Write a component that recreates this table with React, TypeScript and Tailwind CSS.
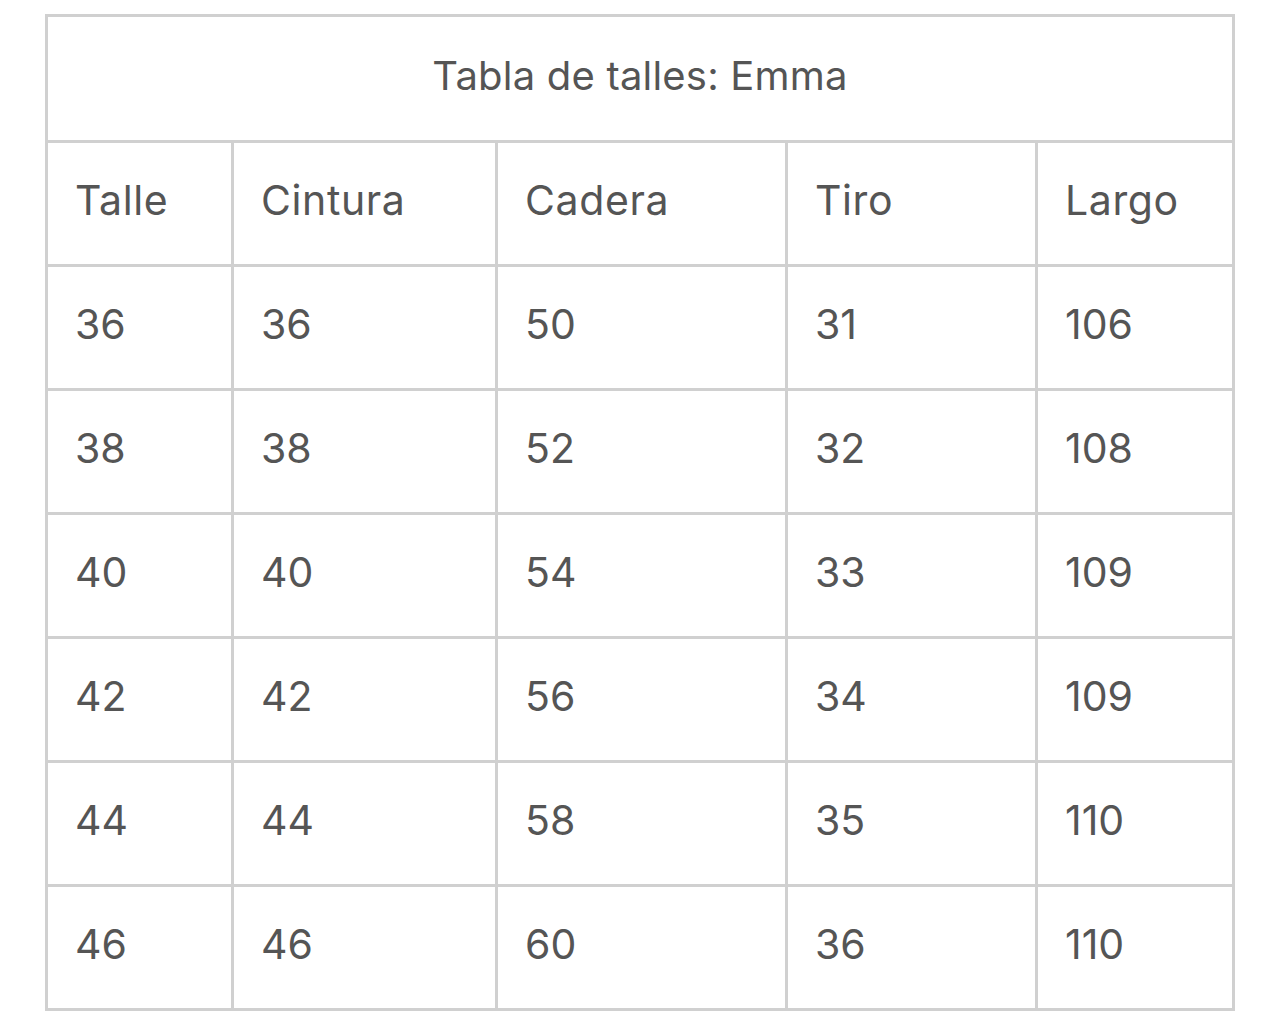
const rows = [
  ["36", "36", "50", "31", "106"],
  ["38", "38", "52", "32", "108"],
  ["40", "40", "54", "33", "109"],
  ["42", "42", "56", "34", "109"],
  ["44", "44", "58", "35", "110"],
  ["46", "46", "60", "36", "110"],
];

const headers = ["Talle", "Cintura", "Cadera", "Tiro", "Largo"];
const widths = ["w-[186px]", "w-[264px]", "w-[290px]", "w-[250px]", "w-[197px]"];

export default function App() {
  return (
    <div
      className="min-h-[1030px] bg-white pt-[14px] pl-[45px]"
      style={{ fontFamily: "Inter, 'Noto Sans', sans-serif" }}
    >
      <table className="w-[1190px] table-fixed border-collapse border-[3px] border-[#d0d0d0] text-[41px] text-[#555555]">
        <colgroup>
          {widths.map((w, i) => (
            <col key={i} className={w} />
          ))}
        </colgroup>
        <thead>
          <tr className="h-[126px]">
            <th
              colSpan={5}
              className="border-[3px] border-[#d0d0d0] pb-[6px] text-center text-[40px] font-normal tracking-[0.2px]"
            >
              Tabla de talles: Emma
            </th>
          </tr>
          <tr className="h-[124px]">
            {headers.map((h) => (
              <th
                key={h}
                className="border-[3px] border-[#d0d0d0] pb-[6px] pl-[27px] text-left font-normal tracking-[0.6px]"
              >
                {h}
              </th>
            ))}
          </tr>
        </thead>
        <tbody>
          {rows.map((r, i) => (
            <tr key={i} className="h-[124px]">
              {r.map((c, j) => (
                <td
                  key={j}
                  className="border-[3px] border-[#d0d0d0] pb-[6px] pl-[27px] text-left"
                >
                  {c}
                </td>
              ))}
            </tr>
          ))}
        </tbody>
      </table>
    </div>
  );
}
